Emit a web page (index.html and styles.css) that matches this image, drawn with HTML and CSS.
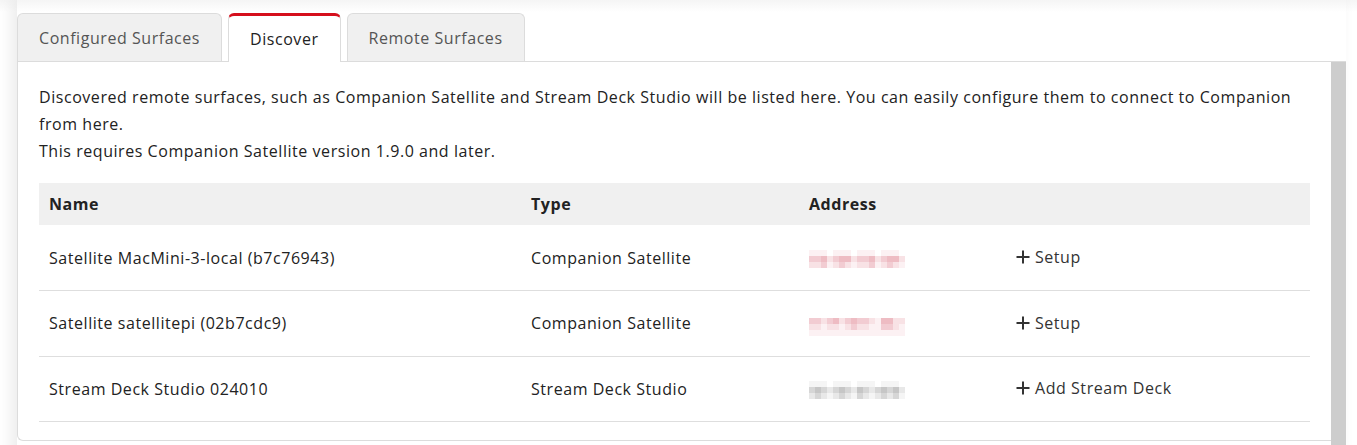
FILE: index.html
```html
<!DOCTYPE html>
<html>
<head>
<meta charset="utf-8">
<link rel="stylesheet" href="styles.css">
</head>
<body>
<div class="wrap">
  <div class="tabs">
    <div class="tab">Configured Surfaces</div>
    <div class="tab active">Discover</div>
    <div class="tab">Remote Surfaces</div>
  </div>
  <div class="panel">
    <div class="panel-body">
      <p class="intro">Discovered remote surfaces, such as Companion Satellite and Stream Deck Studio will be listed here. You can easily configure them to connect to Companion from here.<br>This requires Companion Satellite version 1.9.0 and later.</p>
      <table class="grid">
        <colgroup>
          <col class="c-name"><col class="c-type"><col class="c-addr"><col class="c-act">
        </colgroup>
        <thead>
          <tr><th>Name</th><th>Type</th><th>Address</th><th></th></tr>
        </thead>
        <tbody>
          <tr>
            <td>Satellite MacMini-3-local (b7c76943)</td>
            <td>Companion Satellite</td>
            <td>
              <div class="blur pink">
                <i class="f"></i><i class="f"></i><i class="f"></i><i class="n"></i><i class="f"></i><i class="f"></i><i class="f"></i><i class="n"></i><i class="f"></i><i class="f"></i><i class="f"></i><i class="n"></i><i class="f"></i><i class="f"></i><i class="f"></i><i class="n"></i>
                <i class="m"></i><i class="m"></i><i class="s"></i><i class="l"></i><i class="m"></i><i class="s"></i><i class="s"></i><i class="l"></i><i class="m"></i><i class="m"></i><i class="s"></i><i class="l"></i><i class="m"></i><i class="s"></i><i class="s"></i><i class="l"></i>
                <i class="l"></i><i class="l"></i><i class="m"></i><i class="f"></i><i class="l"></i><i class="m"></i><i class="l"></i><i class="f"></i><i class="l"></i><i class="l"></i><i class="m"></i><i class="f"></i><i class="l"></i><i class="m"></i><i class="l"></i><i class="f"></i>
              </div>
            </td>
            <td><span class="act"><svg class="plus" width="14" height="14" viewBox="0 0 14 14"><path d="M7 0.5v13M0.5 7h13" stroke="#333" stroke-width="2" fill="none"/></svg>Setup</span></td>
          </tr>
          <tr>
            <td>Satellite satellitepi (02b7cdc9)</td>
            <td>Companion Satellite</td>
            <td>
              <div class="blur pink wide">
                <i class="n"></i><i class="n"></i><i class="n"></i><i class="n"></i><i class="n"></i><i class="n"></i><i class="n"></i><i class="n"></i><i class="n"></i><i class="n"></i><i class="n"></i><i class="n"></i><i class="n"></i><i class="n"></i><i class="n"></i><i class="n"></i><i class="n"></i>
                <i class="m"></i><i class="m"></i><i class="l"></i><i class="m"></i><i class="s"></i><i class="l"></i><i class="m"></i><i class="s"></i><i class="m"></i><i class="m"></i><i class="l"></i><i class="f"></i><i class="s"></i><i class="s"></i><i class="l"></i><i class="l"></i><i class="n"></i>
                <i class="l"></i><i class="l"></i><i class="f"></i><i class="l"></i><i class="l"></i><i class="f"></i><i class="l"></i><i class="m"></i><i class="l"></i><i class="l"></i><i class="f"></i><i class="f"></i><i class="m"></i><i class="m"></i><i class="l"></i><i class="f"></i><i class="n"></i>
                <i class="f"></i><i class="f"></i><i class="f"></i><i class="f"></i><i class="f"></i><i class="f"></i><i class="f"></i><i class="f"></i><i class="f"></i><i class="f"></i><i class="f"></i><i class="f"></i><i class="f"></i><i class="f"></i><i class="f"></i><i class="f"></i><i class="n"></i>
              </div>
            </td>
            <td><span class="act"><svg class="plus" width="14" height="14" viewBox="0 0 14 14"><path d="M7 0.5v13M0.5 7h13" stroke="#333" stroke-width="2" fill="none"/></svg>Setup</span></td>
          </tr>
          <tr>
            <td>Stream Deck Studio 024010</td>
            <td>Stream Deck Studio</td>
            <td>
              <div class="blur gray">
                <i class="f"></i><i class="f"></i><i class="f"></i><i class="n"></i><i class="f"></i><i class="f"></i><i class="f"></i><i class="n"></i><i class="f"></i><i class="f"></i><i class="f"></i><i class="n"></i><i class="f"></i><i class="f"></i><i class="f"></i><i class="n"></i>
                <i class="m"></i><i class="s"></i><i class="m"></i><i class="l"></i><i class="m"></i><i class="s"></i><i class="m"></i><i class="l"></i><i class="s"></i><i class="m"></i><i class="l"></i><i class="m"></i><i class="s"></i><i class="m"></i><i class="s"></i><i class="l"></i>
                <i class="l"></i><i class="m"></i><i class="l"></i><i class="f"></i><i class="l"></i><i class="m"></i><i class="l"></i><i class="f"></i><i class="m"></i><i class="l"></i><i class="f"></i><i class="l"></i><i class="m"></i><i class="l"></i><i class="m"></i><i class="f"></i>
              </div>
            </td>
            <td><span class="act"><svg class="plus" width="14" height="14" viewBox="0 0 14 14"><path d="M7 0.5v13M0.5 7h13" stroke="#333" stroke-width="2" fill="none"/></svg>Add Stream Deck</span></td>
          </tr>
        </tbody>
      </table>
    </div>
    <div class="scrollbar"></div>
  </div>
</div>
</body>
</html>
```
FILE: styles.css
```css
* { box-sizing: border-box; }
html, body { margin: 0; padding: 0; }
body {
  height: 445px;
  overflow: hidden;
  background: linear-gradient(#f5f5f5, #fff 12px);
  font-family: "Open Sans", "Noto Sans", sans-serif;
  font-size: 16px;
  letter-spacing: 0.55px;
  color: #222;
}
.wrap {
  margin: 0 11px 0 17px;
  padding-top: 13px;
  height: 460px;
  box-shadow: -6px 0 14px rgba(0, 0, 0, 0.08);
}
.tabs {
  display: flex;
  gap: 6px;
  height: 48px;
}
.tab {
  display: flex;
  align-items: center;
  padding: 0 21px;
  background: #f0f0f0;
  border: 1px solid #dcdcdc;
  border-bottom: none;
  border-radius: 6px 6px 0 0;
  color: #555;
  height: 48px;
}
.tab.active {
  background: #fff;
  color: #222;
  border-top: 3px solid #d50f1c;
  height: 49px;
  margin-bottom: -1px;
  position: relative;
  z-index: 1;
}
.panel {
  display: flex;
  height: 380px;
  border-top: 1px solid #dcdcdc;
  border-left: 1px solid #dcdcdc;
  border-bottom: 1px solid #dcdcdc;
  border-bottom-left-radius: 6px;
  background: #fff;
}
.panel-body {
  flex: 1;
  padding: 22px 21px 0 21px;
}
.scrollbar {
  width: 15px;
  background: #cdcdcd;
  margin-bottom: -5px;
}
.intro {
  margin: 0 0 18px 0;
  line-height: 27px;
}
.grid {
  width: 100%;
  border-collapse: collapse;
  table-layout: fixed;
}
.c-name { width: 482px; }
.c-type { width: 278px; }
.c-addr { width: 207px; }
.grid th {
  background: #f0f0f0;
  text-align: left;
  font-weight: 700;
  height: 42px;
  padding: 0 10px;
}
.grid td {
  height: 65.5px;
  padding: 0 10px;
  border-bottom: 1px solid #dedede;
  vertical-align: middle;
}
.act {
  display: inline-flex;
  align-items: center;
  gap: 5px;
  color: #333;
}
.plus { display: block; }
.blur {
  display: grid;
  grid-template-columns: repeat(16, 6px);
  grid-auto-rows: 6px;
  margin-top: 2px;
}
.blur.wide { grid-template-columns: repeat(17, 6px); }
.blur i { display: block; }
.pink .s { background: #eebcc3; }
.pink .m { background: #f2ccd2; }
.pink .l { background: #f8e2e5; }
.pink .f { background: #fcf1f3; }
.gray .s { background: #c6c6c6; }
.gray .m { background: #d6d6d6; }
.gray .l { background: #e8e8e8; }
.gray .f { background: #f5f5f5; }
.n { background: transparent; }
```
